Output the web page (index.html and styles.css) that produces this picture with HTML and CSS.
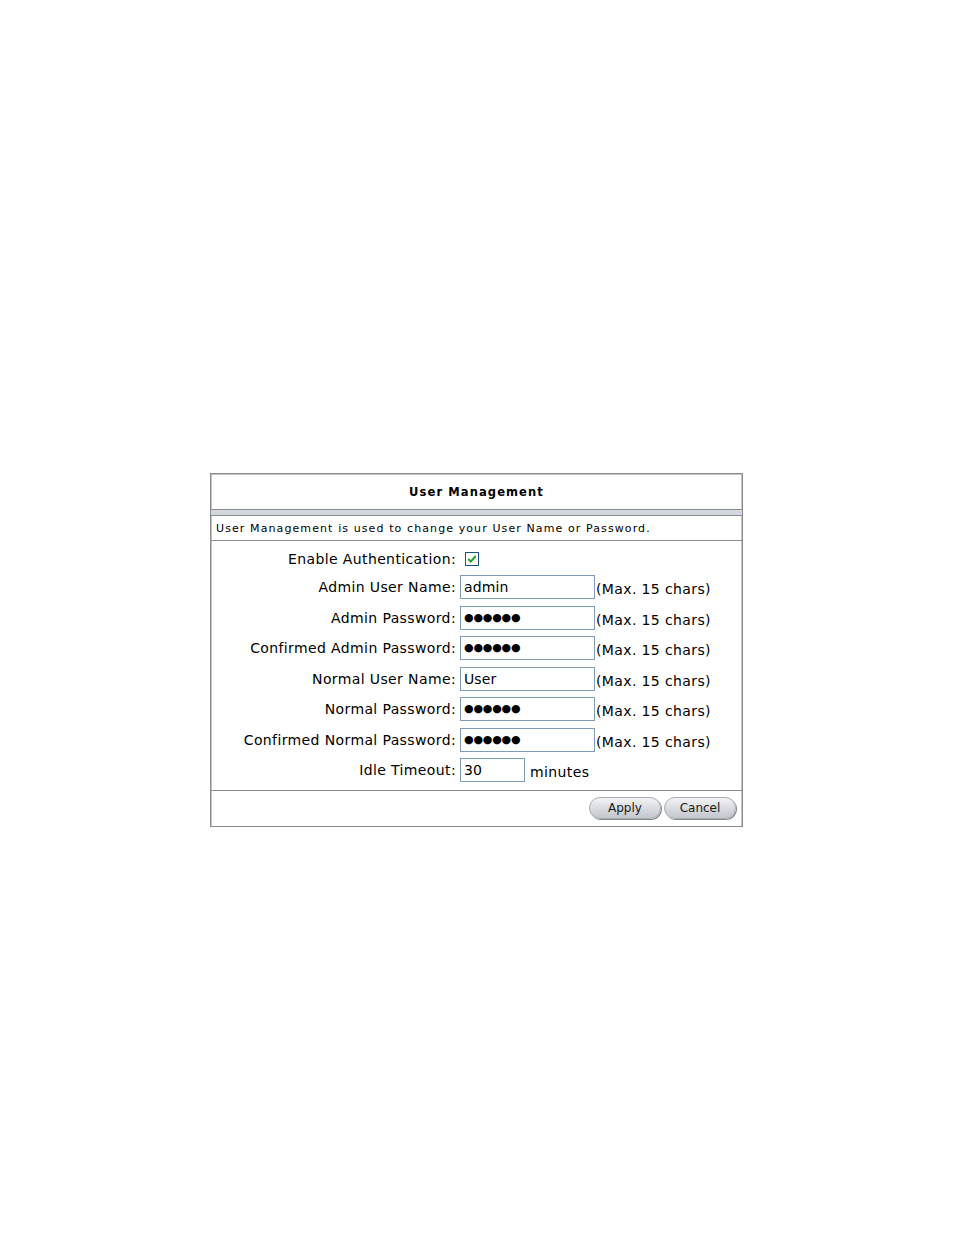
FILE: index.html
```html
<!DOCTYPE html>
<html>
<head>
<meta charset="utf-8">
<link rel="stylesheet" href="styles.css">
</head>
<body>
<div class="page">
  <div class="panel">
    <div class="title">User Management</div>
    <div class="band"></div>
    <div class="desc">User Management is used to change your User Name or Password.</div>
    <div class="form">
      <div class="label">Enable Authentication:</div>
      <div class="field"><span class="check"><svg width="14" height="14" viewBox="0 0 14 14"><rect x="0.5" y="0.5" width="13" height="13" fill="#fff" stroke="#1c5180"/><path d="M3.3 7 L5.8 9.6 L10.7 4" fill="none" stroke="#21a121" stroke-width="2"/></svg></span></div>

      <div class="label">Admin User Name:</div>
      <div class="field"><span class="input">admin</span><span class="hint">(Max. 15 chars)</span></div>

      <div class="label">Admin Password:</div>
      <div class="field"><span class="input pw">●●●●●●</span><span class="hint">(Max. 15 chars)</span></div>

      <div class="label">Confirmed Admin Password:</div>
      <div class="field"><span class="input pw">●●●●●●</span><span class="hint">(Max. 15 chars)</span></div>

      <div class="label">Normal User Name:</div>
      <div class="field"><span class="input">User</span><span class="hint">(Max. 15 chars)</span></div>

      <div class="label">Normal Password:</div>
      <div class="field"><span class="input pw">●●●●●●</span><span class="hint">(Max. 15 chars)</span></div>

      <div class="label">Confirmed Normal Password:</div>
      <div class="field"><span class="input pw">●●●●●●</span><span class="hint">(Max. 15 chars)</span></div>

      <div class="label">Idle Timeout:</div>
      <div class="field"><span class="input short">30</span><span class="unit">minutes</span></div>
    </div>
    <div class="footer">
      <span class="btn">Apply</span>
      <span class="btn">Cancel</span>
    </div>
  </div>
</div>
</body>
</html>
```
FILE: styles.css
```css
html, body {
  margin: 0;
  padding: 0;
  background: #fff;
}
body {
  font-family: "DejaVu Sans", Verdana, sans-serif;
  color: #000;
}
.page {
  padding-top: 473px;
  padding-left: 210px;
}
.panel {
  border: 1px solid #8c8c8c;
  box-shadow: inset 1px 1px 0 #c4c4c4, inset -1px 0 0 #c4c4c4;
  box-sizing: border-box;
  width: 533px;
}
.title {
  height: 35px;
  line-height: 36px;
  text-align: center;
  font-weight: bold;
  font-size: 11.5px;
  letter-spacing: 1.1px;
}
.band {
  height: 5px;
  background: #d3d7df;
  border-top: 1px solid #8c8c8c;
  border-bottom: 1px solid #8c8c8c;
}
.desc {
  height: 24px;
  line-height: 25px;
  font-size: 11px;
  letter-spacing: 1.1px;
  padding-left: 5px;
  border-bottom: 1px solid #8c8c8c;
}
.form {
  display: grid;
  grid-template-columns: 245px 1fr;
  column-gap: 4px;
  grid-template-rows: 26px;
  grid-auto-rows: 30.5px;
  padding-top: 5px;
  padding-bottom: 4px;
  border-bottom: 1px solid #8c8c8c;
  font-size: 14px;
  letter-spacing: 0.38px;
}
.label {
  text-align: right;
  align-self: center;
  white-space: nowrap;
}
.field {
  display: flex;
  align-items: center;
}
.input {
  box-sizing: border-box;
  width: 135px;
  height: 24px;
  border: 1px solid #7f9db9;
  padding-left: 3px;
  line-height: 22px;
  font-size: 14px;
  letter-spacing: 0.1px;
}
.input.short {
  width: 65px;
}
.input.pw {
  font-size: 11px;
  letter-spacing: -0.2px;
}
.hint {
  margin-top: 4px;
  padding-left: 1px;
}
.unit {
  margin-top: 4px;
  padding-left: 5px;
}
.check {
  display: flex;
  padding-left: 5px;
}
.footer {
  height: 35px;
  display: flex;
  justify-content: flex-end;
  align-items: center;
  gap: 3px;
  padding-right: 6px;
}
.btn {
  width: 72px;
  height: 22px;
  box-sizing: border-box;
  border-radius: 11px;
  background: linear-gradient(#f3f4f6, #d6d9de 55%, #c4c7cd);
  border: 1px solid #a9acb2;
  box-shadow: 1px 1px 0 #85888e;
  text-align: center;
  line-height: 20px;
  font-size: 12px;
  color: #1a1a1a;
}
```
